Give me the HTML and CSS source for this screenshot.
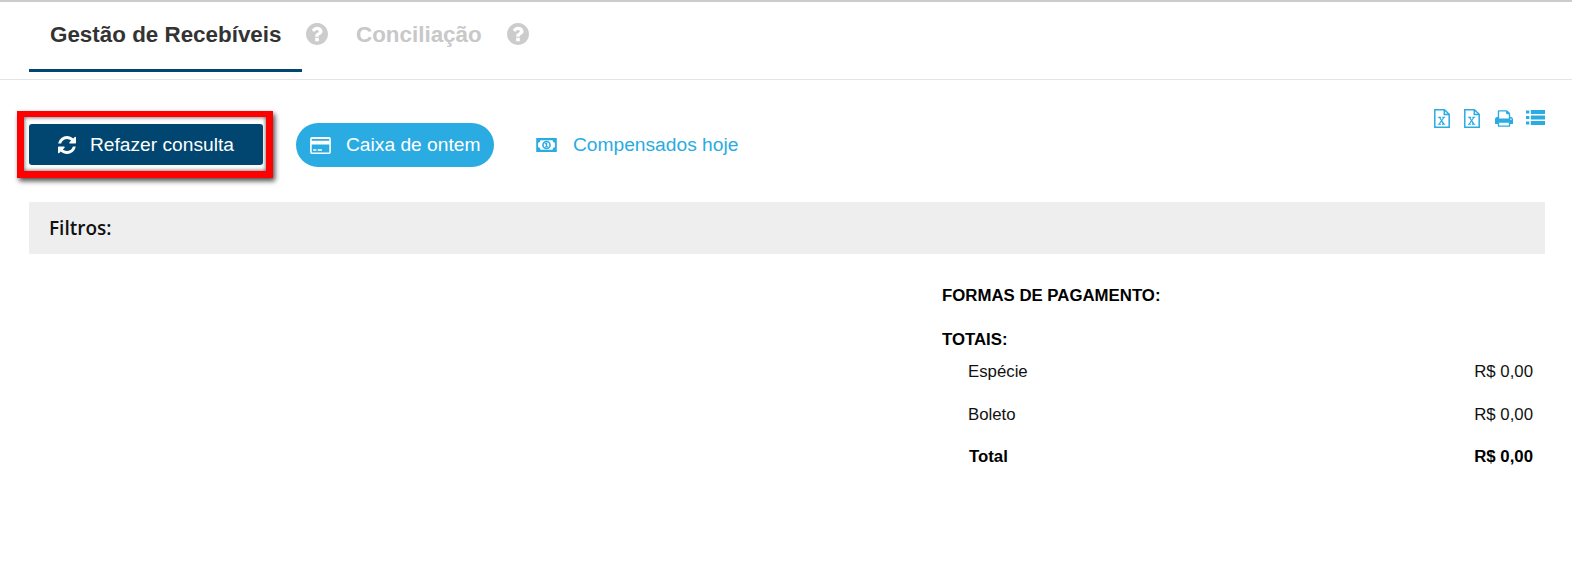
FILE: index.html
```html
<!DOCTYPE html>
<html lang="pt-BR">
<head>
<meta charset="utf-8">
<title>Gestão de Recebíveis</title>
<link rel="stylesheet" href="styles.css">
</head>
<body>
<nav class="tabs">
  <a class="tab active">Gestão de Recebíveis</a>
  <svg class="help" viewBox="128 128 1536 1536"><path fill="#ccc" d="M1024 1376v-192q0-14-9-23t-23-9h-192q-14 0-23 9t-9 23v192q0 14 9 23t23 9h192q14 0 23-9t9-23zm256-672q0-88-55.500-163t-138.500-116-170-41q-243 0-371 213-15 24 8 42l132 100q7 6 19 6 16 0 25-12 53-68 86-92 34-24 86-24 48 0 85.500 26t37.500 59q0 38-20 61t-68 45q-63 28-115.500 86.500t-52.500 125.500v36q0 14 9 23t23 9h192q14 0 23-9t9-23q0-19 21.500-49.500t54.500-49.500q32-18 49-28.500t46-35 44.500-48 28-60.500 12.500-81zm384 192q0 209-103 385.500t-279.500 279.500-385.500 103-385.500-103-279.500-279.500-103-385.500 103-385.500 279.500-279.500 385.500-103 385.500 103 279.500 279.500 103 385.500z"/></svg>
  <a class="tab">Conciliação</a>
  <svg class="help" viewBox="128 128 1536 1536"><path fill="#ccc" d="M1024 1376v-192q0-14-9-23t-23-9h-192q-14 0-23 9t-9 23v192q0 14 9 23t23 9h192q14 0 23-9t9-23zm256-672q0-88-55.500-163t-138.500-116-170-41q-243 0-371 213-15 24 8 42l132 100q7 6 19 6 16 0 25-12 53-68 86-92 34-24 86-24 48 0 85.500 26t37.500 59q0 38-20 61t-68 45q-63 28-115.500 86.500t-52.500 125.500v36q0 14 9 23t23 9h192q14 0 23-9t9-23q0-19 21.500-49.500t54.500-49.500q32-18 49-28.500t46-35 44.500-48 28-60.500 12.500-81zm384 192q0 209-103 385.500t-279.500 279.500-385.500 103-385.500-103-279.500-279.500-103-385.500 103-385.500 279.500-279.500 385.500-103 385.500 103 279.500 279.500 103 385.500z"/></svg>
</nav>
<main class="content">
  <div class="toolbar">
    <div class="actions">
      <div class="highlight">
        <button class="btn-primary">
          <svg class="icon-refresh" viewBox="128 128 1536 1536"><path fill="#fff" d="M1639 1056q0 5-1 7-64 268-268 434.500t-478 166.500q-146 0-282.500-55t-243.500-157l-129 129q-19 19-45 19t-45-19-19-45v-448q0-26 19-45t45-19h448q26 0 45 19t19 45-19 45l-137 137q71 66 161 102t187 36q134 0 250-65t186-179q11-17 53-117 8-23 30-23h192q13 0 22.500 9.500t9.500 22.500zm25-800v448q0 26-19 45t-45 19h-448q-26 0-45-19t-19-45 19-45l138-138q-148-137-349-137-134 0-250 65t-186 179q-11 17-53 117-8 23-30 23h-199q-13 0-22.500-9.500t-9.500-22.500v-7q65-268 270-434.500t480-166.500q146 0 284 55.500t245 156.500l130-129q19-19 45-19t45 19 19 45z"/></svg>
          Refazer consulta
        </button>
      </div>
      <a class="pill">
        <svg class="icon-card" viewBox="0 0 22 18"><path fill="#fff" fill-rule="evenodd" d="M2 0h18a2 2 0 0 1 2 2v14a2 2 0 0 1-2 2H2a2 2 0 0 1-2-2V2a2 2 0 0 1 2-2zM1.700 2v2h18.600V2zM1.700 8v8.300h18.600V8zM3.200 13h3.400v1.600H3.200zM8 13h4.500v1.600H8z"/></svg>
        Caixa de ontem
      </a>
      <a class="link">
        <svg class="icon-money" viewBox="0 0 22 15"><path fill="#2aabe2" fill-rule="evenodd" d="M0 0h22v15H0zM4.500 2.500a2.500 2.500 0 0 1-2.500 2.500v5a2.500 2.500 0 0 1 2.500 2.500h13a2.500 2.500 0 0 1 2.500-2.500V5a2.500 2.500 0 0 1-2.500-2.500z"/><circle cx="11" cy="7.500" r="3.800" fill="#fff" stroke="#2aabe2" stroke-width="1.700"/><path fill="#2aabe2" d="M10.300 5h1.500v3.800h.8v1.200H9.500V8.800h.8V6.500l-.8.400-.4-1z"/></svg>
        Compensados hoje
      </a>
    </div>
    <div class="tools">
      <svg class="tool" viewBox="0 0 16 20" preserveAspectRatio="none"><path fill="none" stroke="#2aabe2" stroke-width="1.500" d="M.8.800h9.600l4.800 4.800v13.600H.8zM10.300.8v5h5"/><path fill="#2aabe2" d="M4 8.200h3.200v1h-.7l1.200 2 1.200-2h-.7v-1h3v1h-.9l-2 3 2.100 3.300h.8v1H7.900v-1h.7l-1.200-2.100-1.300 2.100h.8v1H3.900v-1h.9l2.100-3.300-1.900-3H4z"/></svg>
      <svg class="tool" viewBox="0 0 16 20" preserveAspectRatio="none"><path fill="none" stroke="#2aabe2" stroke-width="1.500" d="M.8.800h9.600l4.800 4.800v13.600H.8zM10.300.8v5h5"/><path fill="#2aabe2" d="M4 8.200h3.200v1h-.7l1.200 2 1.200-2h-.7v-1h3v1h-.9l-2 3 2.100 3.300h.8v1H7.900v-1h.7l-1.200-2.100-1.300 2.100h.8v1H3.900v-1h.9l2.100-3.300-1.900-3H4z"/></svg>
      <svg class="tool-print" viewBox="64 128 1664 1536"><path fill="#2aabe2" d="M448 1536h896v-256h-896v256zm0-640h896v-384h-160q-40 0-68-28t-28-68v-160h-640v640zm1152 64q0-26-19-45t-45-19-45 19-19 45 19 45 45 19 45-19 19-45zm128 0v416q0 13-9.500 22.500t-22.500 9.500h-224v160q0 40-28 68t-68 28h-960q-40 0-68-28t-28-68v-160h-224q-13 0-22.500-9.500t-9.500-22.500v-416q0-79 56.500-135.500t135.500-56.500h64v-544q0-40 28-68t68-28h672q40 0 88 20t76 48l152 152q28 28 48 76t20 88v256h64q79 0 135.500 56.500t56.500 135.500z"/></svg>
      <svg class="tool-list" viewBox="0 0 19 15"><path fill="#2aabe2" d="M0 .5h3.300v3H0zM4.800 0H19v4H4.800zM0 6h3.300v3H0zM4.800 5.500H19v4H4.800zM0 11.500h3.300v3H0zM4.800 11H19v4H4.800z"/></svg>
    </div>
  </div>
  <div class="filters">Filtros:</div>
  <section class="summary">
    <h2 class="summary-title">FORMAS DE PAGAMENTO:</h2>
    <h2 class="summary-totals">TOTAIS:</h2>
    <div class="row"><span>Espécie</span><span>R$ 0,00</span></div>
    <div class="row"><span>Boleto</span><span>R$ 0,00</span></div>
    <div class="row total"><span>Total</span><span>R$ 0,00</span></div>
  </section>
</main>
</body>
</html>
```
FILE: styles.css
```css
* { box-sizing: border-box; }
html, body { margin: 0; background: #fff; }
body {
  height: 561px;
  overflow: hidden;
  border-top: 2px solid #ccc;
  font-family: "Liberation Sans", Arial, sans-serif;
}
.tabs {
  height: 78px;
  display: flex;
  align-items: flex-start;
  padding-left: 29px;
  border-bottom: 1px solid #e5e5e5;
}
.tab {
  height: 70px;
  padding: 20px 21px 0;
  font-size: 22.4px;
  line-height: 26px;
  font-weight: bold;
  color: #c8c8c8;
  white-space: nowrap;
}
.tab.active {
  color: #333;
  width: 273px;
  border-bottom: 3px solid #004670;
}
.help { width: 22px; height: 22px; margin: 21px 28px 0 4px; flex: none; }
.help + .tab { padding-left: 0; padding-right: 21px; }
.content { padding: 0 27px 0 29px; }
.toolbar {
  height: 122px;
  display: flex;
  justify-content: space-between;
}
.actions { display: flex; align-items: flex-start; padding-top: 31px; margin-left: -12px; }
.highlight {
  width: 256px;
  height: 67px;
  padding: 7px 3px 6px 5px;
  border: solid #f00;
  border-width: 6px 7px 7px;
  box-shadow: 2px 3px 5px rgba(0,0,0,.7), inset 0 0 4px rgba(0,0,0,.7);
  background: #fff;
}
.btn-primary {
  display: flex;
  align-items: center;
  justify-content: center;
  width: 100%;
  height: 100%;
  padding: 0;
  border: 0;
  border-radius: 3px;
  background: #004670;
  color: #fff;
  font: 19.2px "Liberation Sans", Arial, sans-serif;
}
.icon-refresh { width: 18px; height: 18px; margin-right: 14px; }
.pill {
  display: flex;
  align-items: center;
  width: 198px;
  height: 44px;
  margin: 12px 0 0 23px;
  padding-left: 14px;
  border-radius: 22px;
  background: #2aabe2;
  color: #fff;
  font-size: 19.2px;
  white-space: nowrap;
}
.icon-card { width: 21px; height: 17px; margin-right: 15px; }
.link {
  display: flex;
  align-items: center;
  height: 44px;
  margin: 12px 0 0 42px;
  color: #2aabe2;
  font-size: 19.2px;
}
.icon-money { width: 21px; height: 14px; margin-right: 16px; }
.tools { display: flex; align-items: flex-start; padding-top: 29px; }
.tool { width: 16px; height: 19px; margin-right: 14px; }
.tool-print { width: 18px; height: 17px; margin: 1px 13px 0 1px; }
.tool-list { width: 19px; height: 15px; margin-top: 1px; }
.filters {
  height: 52px;
  padding: 15px 20px 0;
  background: #eee;
  font: 600 19px/22px "Open Sans", sans-serif;
  color: #111;
}
.summary {
  width: 603px;
  margin: 31px 0 0 auto;
  color: #111;
}
.summary-title, .summary-totals { margin: 0; font-size: 16.800px; line-height: 22px; font-weight: bold; color: #000; }
.summary-totals { margin-top: 22px; }
.row {
  display: flex;
  justify-content: space-between;
  height: 43px;
  padding: 10px 12px 0 26px;
  font-size: 16.800px;
  line-height: 22px;
}
.row.total { font-weight: bold; color: #000; height: 42px; padding: 9px 12px 0 27px; }
```
